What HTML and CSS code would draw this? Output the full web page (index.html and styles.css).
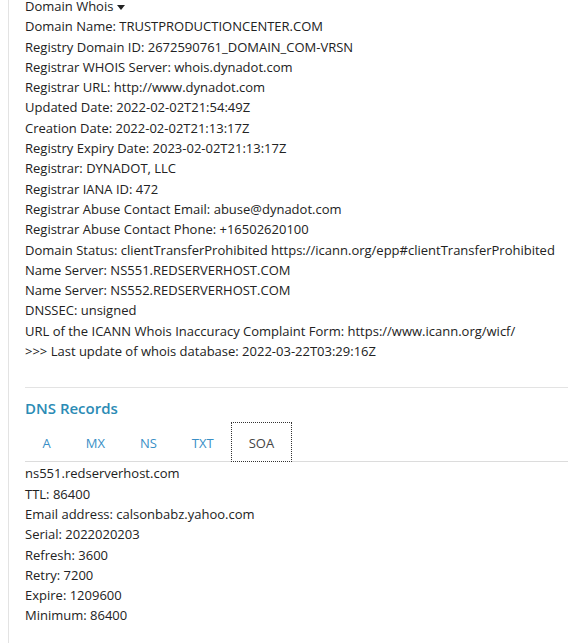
FILE: index.html
```html
<!DOCTYPE html>
<html>
<head>
<meta charset="utf-8">
<link rel="stylesheet" href="styles.css">
</head>
<body>
<div class="panel">
  <div class="whois">
    <div class="title">Domain Whois <span class="caret"></span></div>
    <div>Domain Name: TRUSTPRODUCTIONCENTER.COM</div>
    <div>Registry Domain ID: 2672590761_DOMAIN_COM-VRSN</div>
    <div>Registrar WHOIS Server: whois.dynadot.com</div>
    <div>Registrar URL: http://www.dynadot.com</div>
    <div>Updated Date: 2022-02-02T21:54:49Z</div>
    <div>Creation Date: 2022-02-02T21:13:17Z</div>
    <div>Registry Expiry Date: 2023-02-02T21:13:17Z</div>
    <div>Registrar: DYNADOT, LLC</div>
    <div>Registrar IANA ID: 472</div>
    <div>Registrar Abuse Contact Email: abuse@dynadot.com</div>
    <div>Registrar Abuse Contact Phone: +16502620100</div>
    <div>Domain Status: clientTransferProhibited https://icann.org/epp#clientTransferProhibited</div>
    <div>Name Server: NS551.REDSERVERHOST.COM</div>
    <div>Name Server: NS552.REDSERVERHOST.COM</div>
    <div>DNSSEC: unsigned</div>
    <div>URL of the ICANN Whois Inaccuracy Complaint Form: https://www.icann.org/wicf/</div>
    <div>&gt;&gt;&gt; Last update of whois database: 2022-03-22T03:29:16Z</div>
  </div>
  <hr class="sep">
  <h2 class="dns-title">DNS Records</h2>
  <ul class="tabs">
    <li class="tab">A</li>
    <li class="tab">MX</li>
    <li class="tab">NS</li>
    <li class="tab">TXT</li>
    <li class="tab active">SOA</li>
  </ul>
  <div class="records">
    <div>ns551.redserverhost.com</div>
    <div>TTL: 86400</div>
    <div>Email address: calsonbabz.yahoo.com</div>
    <div>Serial: 2022020203</div>
    <div>Refresh: 3600</div>
    <div>Retry: 7200</div>
    <div>Expire: 1209600</div>
    <div>Minimum: 86400</div>
  </div>
</div>
</body>
</html>
```
FILE: styles.css
```css
html, body {
  margin: 0;
  padding: 0;
  background: #fff;
  overflow: hidden;
}
body {
  font-family: "Open Sans", "Noto Sans", sans-serif;
  font-size: 13px;
  color: #222;
}
.panel {
  margin-left: 8px;
  margin-top: -4px;
  border-left: 1px solid #e3e3e3;
  padding-left: 16px;
  padding-bottom: 40px;
}
.whois div {
  line-height: 20.3px;
  white-space: nowrap;
}
.caret {
  display: inline-block;
  width: 0;
  height: 0;
  border-left: 4px solid transparent;
  border-right: 4px solid transparent;
  border-top: 5px solid #222;
  vertical-align: middle;
  margin-left: 0;
}
.sep {
  border: 0;
  border-top: 1px solid #e3e3e3;
  margin: 26px 0 0 0;
}
.dns-title {
  margin: 9px 0 0 0;
  font-size: 15px;
  font-weight: 600;
  color: #2b8bb5;
  line-height: 22px;
}
.tabs {
  list-style: none;
  margin: 3px 0 0 0;
  padding: 0;
  display: flex;
  border-bottom: 1px solid #dcdcdc;
}
.tab {
  padding: 0 16.5px;
  height: 38px;
  line-height: 40px;
  color: #3a8fc6;
  border: 1px solid transparent;
  margin-bottom: -1px;
}
.tab.active {
  color: #444;
  border: 1px dotted #333;
  background: #fff;
}
.records {
  padding-top: 1px;
}
.records div {
  line-height: 20.3px;
}
```
